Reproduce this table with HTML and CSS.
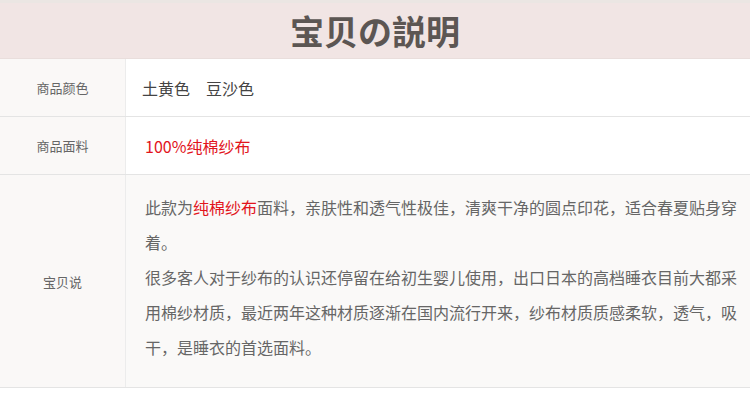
FILE: index.html
```html
<!DOCTYPE html>
<html lang="zh-CN">
<head>
  <meta charset="UTF-8">
  <title>宝贝の説明</title>
  <link rel="stylesheet" href="styles.css">
</head>
<body>
  <div class="page">
    <h1 class="title">宝贝の説明</h1>

    <div class="row row-short">
      <div class="label">商品颜色</div>
      <div class="value colors">土黄色　豆沙色</div>
    </div>

    <div class="row row-short">
      <div class="label">商品面料</div>
      <div class="value red">100%纯棉纱布</div>
    </div>

    <div class="row row-desc">
      <div class="label">宝贝说</div>
      <div class="value desc">
        <p>此款为<span class="red">纯棉纱布</span>面料，亲肤性和透气性极佳，清爽干净的圆点印花，适合春夏贴身穿着。</p>
        <p>很多客人对于纱布的认识还停留在给初生婴儿使用，出口日本的高档睡衣目前大都采用棉纱材质，最近两年这种材质逐渐在国内流行开来，纱布材质质感柔软，透气，吸干，是睡衣的首选面料。</p>
      </div>
    </div>
  </div>
</body>
</html>
```

FILE: styles.css
```css
body {
  margin: 0;
  background: #fff;
  font-family: "Noto Sans CJK SC", "Noto Sans", sans-serif;
}
.page {
  width: 750px;
}
.title {
  margin: 0;
  height: 55px;
  line-height: 55px;
  border-top: 3px solid #ebe6e3;
  border-bottom: 1px solid #e9dedc;
  background: #f1e5e4;
  color: #5c5653;
  font-size: 34px;
  font-weight: bold;
  text-align: center;
}
.row {
  display: grid;
  grid-template-columns: 126px 1fr;
  border-bottom: 1px solid #e4e4e4;
}
.row-short {
  height: 57px;
}
.label {
  display: flex;
  align-items: center;
  justify-content: center;
  background: #faf8f7;
  border-right: 1px solid #ececec;
  color: #666;
  font-size: 13px;
}
.value {
  display: flex;
  align-items: center;
  padding: 0 10px 0 19px;
  color: #444;
  font-size: 16px;
}
.colors {
  padding-left: 16px;
}
.red {
  color: #e2141c;
}
.row-desc .value {
  display: block;
  background: #faf9f8;
}
.desc {
  padding-top: 15px;
  padding-bottom: 22px;
}
.desc p {
  margin: 0;
  color: #666;
  line-height: 35px;
}
```
